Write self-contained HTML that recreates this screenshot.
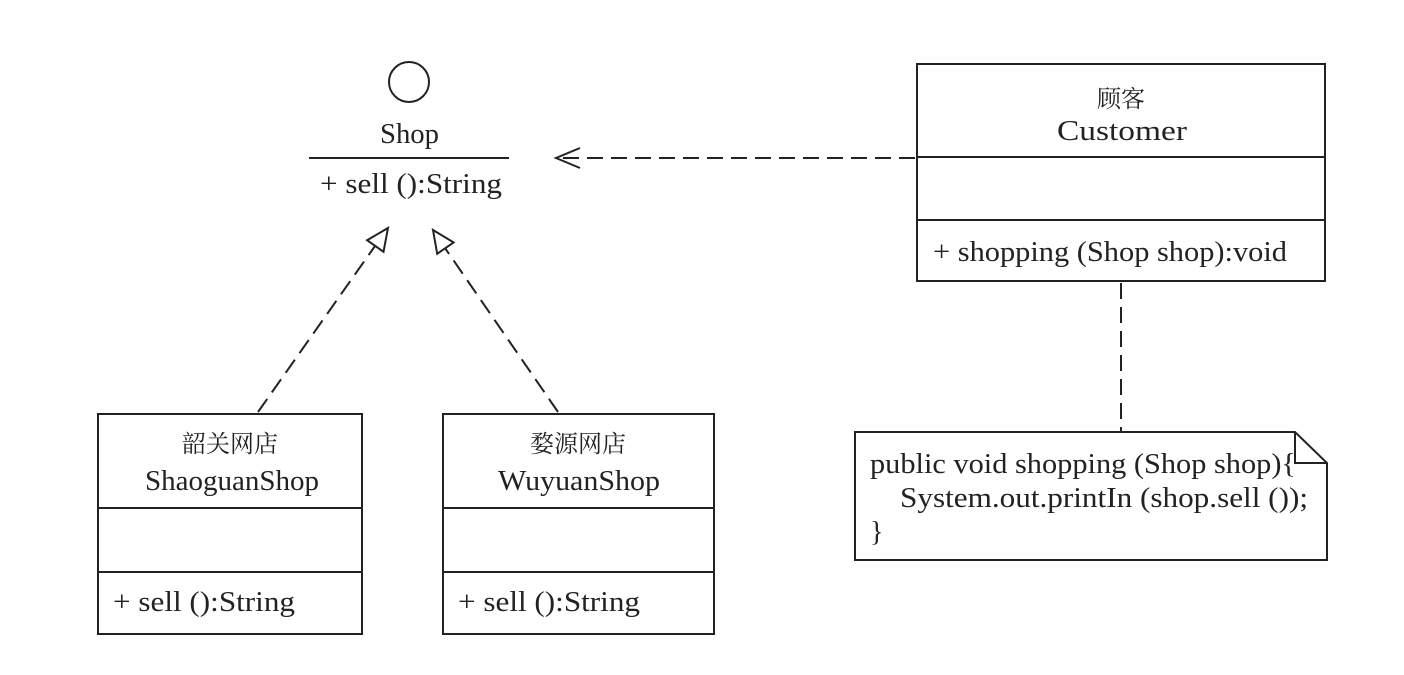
<!DOCTYPE html>
<html><head><meta charset="utf-8"><style>
html,body{margin:0;padding:0;background:#fff;}
svg text{font-family:"Liberation Serif","Noto Serif CJK SC",serif;font-size:28px;fill:#222;}
svg text.cj{font-size:24px;}
</style></head><body>
<svg width="1404" height="670" viewBox="0 0 1404 670" xmlns="http://www.w3.org/2000/svg">
<g stroke="#222" stroke-width="2" fill="none">
<circle cx="409" cy="82" r="20"/>
<line x1="309" y1="158" x2="509" y2="158"/>
<line x1="915" y1="158" x2="557" y2="158" stroke-dasharray="16,8"/>
<polyline points="580,148 556,158 580,168"/>
<rect x="917" y="64" width="408" height="217"/>
<line x1="917" y1="157" x2="1325" y2="157"/>
<line x1="917" y1="220" x2="1325" y2="220"/>
<line x1="1121" y1="283" x2="1121" y2="432" stroke-dasharray="16,8"/>
<polygon points="855,432 1295,432 1327,463 1327,560 855,560"/>
<polyline points="1295,432 1295,463 1327,463"/>
<rect x="98" y="414" width="264" height="220"/>
<line x1="98" y1="508" x2="362" y2="508"/>
<line x1="98" y1="572" x2="362" y2="572"/>
<rect x="443" y="414" width="271" height="220"/>
<line x1="443" y1="508" x2="714" y2="508"/>
<line x1="443" y1="572" x2="714" y2="572"/>
<line x1="258" y1="412" x2="375" y2="246" stroke-dasharray="16,8"/>
<polygon points="388,228 383.5,251.8 367.1,240.2"/>
<line x1="558" y1="412" x2="445" y2="248" stroke-dasharray="16,8"/>
<polygon points="433,230 453.6,242.4 437.2,253.8"/>
</g>
<text x="380" y="143" textLength="59" lengthAdjust="spacingAndGlyphs">Shop</text>
<text x="320" y="193" textLength="182" lengthAdjust="spacingAndGlyphs">+ sell ():String</text>
<text class="cj" x="1121" y="107" text-anchor="middle">顾客</text>
<text x="1057" y="140" textLength="130" lengthAdjust="spacingAndGlyphs">Customer</text>
<text x="933" y="261" textLength="354" lengthAdjust="spacingAndGlyphs">+ shopping (Shop shop):void</text>
<text x="870" y="473" textLength="426" lengthAdjust="spacingAndGlyphs">public void shopping (Shop shop){</text>
<text x="900" y="507" textLength="408" lengthAdjust="spacingAndGlyphs">System.out.printIn (shop.sell ());</text>
<text x="870" y="541">}</text>
<text class="cj" x="230" y="452" text-anchor="middle">韶关网店</text>
<text x="145" y="490" textLength="174" lengthAdjust="spacingAndGlyphs">ShaoguanShop</text>
<text x="113" y="611" textLength="182" lengthAdjust="spacingAndGlyphs">+ sell ():String</text>
<text class="cj" x="578" y="452" text-anchor="middle">婺源网店</text>
<text x="498" y="490" textLength="162" lengthAdjust="spacingAndGlyphs">WuyuanShop</text>
<text x="458" y="611" textLength="182" lengthAdjust="spacingAndGlyphs">+ sell ():String</text>
</svg>
</body></html>
